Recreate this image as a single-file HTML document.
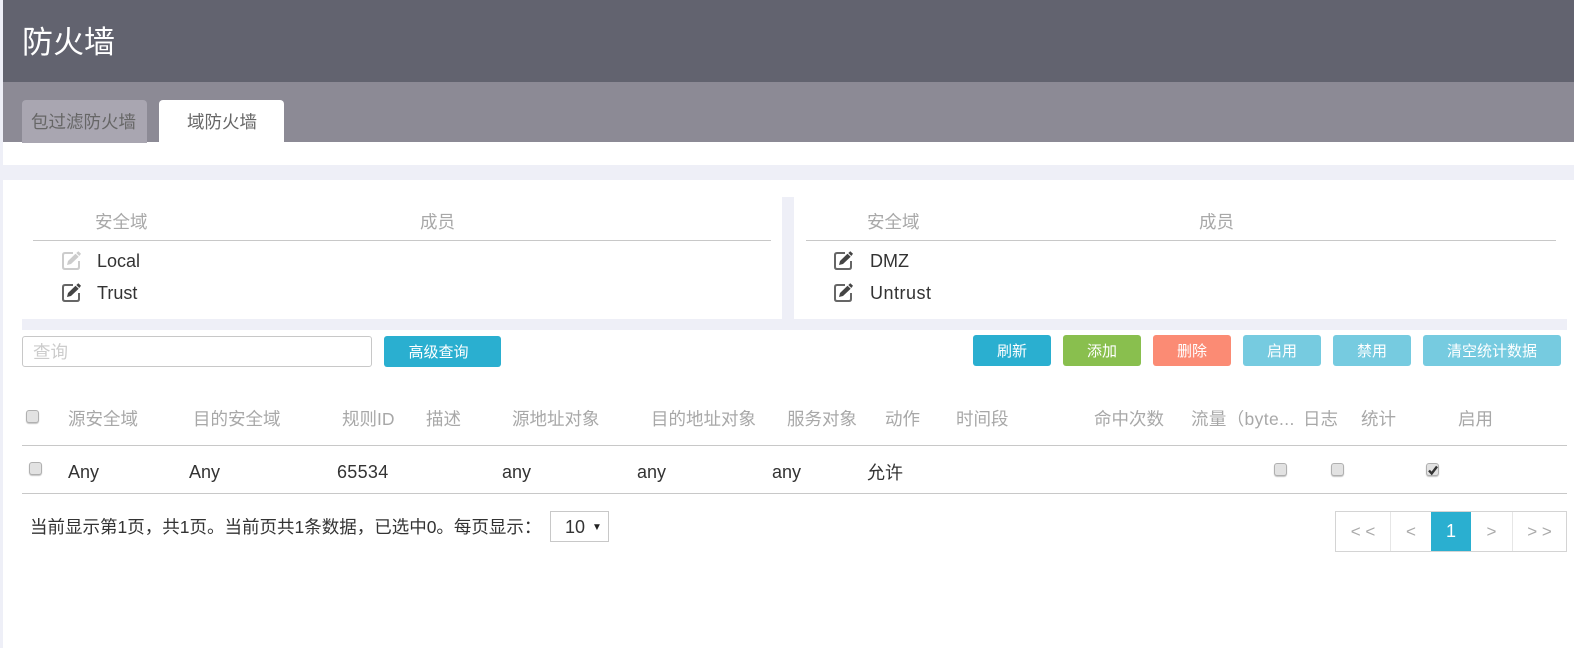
<!DOCTYPE html>
<html lang="zh">
<head>
<meta charset="utf-8">
<title>防火墙</title>
<style>
html,body{margin:0;padding:0;background:#fff}
body{position:relative;width:1574px;height:648px;overflow:hidden;font-family:"Liberation Sans","Noto Sans CJK SC",sans-serif;font-size:18px;color:#333}
.a{position:absolute}
.t{position:absolute;white-space:nowrap;line-height:24px}
.h{color:#a8a8a8}
.btn{position:absolute;top:335px;height:31px;line-height:33px;width:78px;border-radius:3px;color:#fff;text-align:center;font-size:15px}
.cb{position:absolute;width:11px;height:11px;border:1px solid #b0b0b0;border-radius:3px;background:#e2e2e2;box-shadow:0 1px 1px #c4c4c4}
.pg{position:absolute;top:511px;height:40px;line-height:40px;text-align:center;color:#aaa;font-size:17px;border-right:1px solid #e6e6e6;box-sizing:border-box}
svg{position:absolute}
</style>
</head>
<body>
<div class="a" style="left:0;top:0;width:3px;height:648px;background:#eeeff7"></div>
<div class="a" style="left:3px;top:0;width:1571px;height:82px;background:#62636f"></div>
<div class="a" style="left:3px;top:82px;width:1571px;height:60px;background:#8c8a95"></div>
<div class="t" style="left:22px;top:25px;font-size:31px;line-height:36px;color:#fff">防火墙</div>
<div class="a" style="left:22px;top:100px;width:125px;height:43px;background:#a9a6b1;border-radius:4px 4px 0 0"></div>
<div class="t" style="left:31px;top:110px;font-size:17.5px;color:#666">包过滤防火墙</div>
<div class="a" style="left:159px;top:100px;width:125px;height:42px;background:#fff;border-radius:4px 4px 0 0"></div>
<div class="t" style="left:187px;top:110px;font-size:17.5px;color:#666">域防火墙</div>
<div class="a" style="left:3px;top:165px;width:1571px;height:15px;background:#eeeff7"></div>

<div class="a" style="left:782px;top:197px;width:12px;height:122px;background:#eeeff7"></div>
<div class="a" style="left:22px;top:319px;width:1545px;height:11px;background:#eeeff7"></div>
<div class="a" style="left:33px;top:240px;width:738px;height:1px;background:#c8c8c8"></div>
<div class="a" style="left:806px;top:240px;width:750px;height:1px;background:#c8c8c8"></div>

<div class="t h" style="left:95px;top:210px;font-size:17.5px">安全域</div>
<div class="t h" style="left:420px;top:210px;font-size:17.5px">成员</div>
<div class="t h" style="left:867px;top:210px;font-size:17.5px">安全域</div>
<div class="t h" style="left:1199px;top:210px;font-size:17.5px">成员</div>

<svg style="left:62px;top:250px" width="20" height="20" viewBox="0 0 20 20"><path d="M11 3H3Q1 3 1 5V17Q1 19 3 19H15Q17 19 17 17V11" fill="none" stroke="#ccc" stroke-width="2"/><path d="M5 15L6 11L13.500 3.700L16.700 6.800L9 14Z" fill="#ccc"/><path d="M14.300 3L16.300 1.200L19 3.800L17.300 6Z" fill="#ccc"/></svg>
<svg style="left:62px;top:282px" width="20" height="20" viewBox="0 0 20 20"><path d="M11 3H3Q1 3 1 5V17Q1 19 3 19H15Q17 19 17 17V11" fill="none" stroke="#666" stroke-width="2"/><path d="M5 15L6 11L13.500 3.700L16.700 6.800L9 14Z" fill="#444"/><path d="M14.300 3L16.300 1.200L19 3.800L17.300 6Z" fill="#444"/></svg>
<svg style="left:834px;top:250px" width="20" height="20" viewBox="0 0 20 20"><path d="M11 3H3Q1 3 1 5V17Q1 19 3 19H15Q17 19 17 17V11" fill="none" stroke="#666" stroke-width="2"/><path d="M5 15L6 11L13.500 3.700L16.700 6.800L9 14Z" fill="#444"/><path d="M14.300 3L16.300 1.200L19 3.800L17.300 6Z" fill="#444"/></svg>
<svg style="left:834px;top:282px" width="20" height="20" viewBox="0 0 20 20"><path d="M11 3H3Q1 3 1 5V17Q1 19 3 19H15Q17 19 17 17V11" fill="none" stroke="#666" stroke-width="2"/><path d="M5 15L6 11L13.500 3.700L16.700 6.800L9 14Z" fill="#444"/><path d="M14.300 3L16.300 1.200L19 3.800L17.300 6Z" fill="#444"/></svg>

<div class="t" style="left:97px;top:249px">Local</div>
<div class="t" style="left:97px;top:281px">Trust</div>
<div class="t" style="left:870px;top:249px">DMZ</div>
<div class="t" style="left:870px;top:281px;letter-spacing:.5px">Untrust</div>

<div class="a" style="left:22px;top:336px;width:348px;height:29px;border:1px solid #c8c8c8;border-radius:3px"></div>
<div class="t" style="left:33px;top:340px;color:#ccc;font-size:17.500px">查询</div>
<div class="btn" style="left:384px;top:336px;width:109px;padding-right:8px;background:#2aafd0">高级查询</div>
<div class="btn" style="left:973px;background:#2aafd0">刷新</div>
<div class="btn" style="left:1063px;background:#89bf4e">添加</div>
<div class="btn" style="left:1153px;background:#fb8b74">删除</div>
<div class="btn" style="left:1243px;background:#76cbe0">启用</div>
<div class="btn" style="left:1333px;background:#76cbe0">禁用</div>
<div class="btn" style="left:1423px;width:138px;background:#76cbe0">清空统计数据</div>

<div class="cb" style="left:26px;top:410px"></div>
<div class="t h" style="left:68px;top:407px;font-size:17.500px">源安全域</div>
<div class="t h" style="left:193px;top:407px;font-size:17.500px">目的安全域</div>
<div class="t h" style="left:342px;top:407px;font-size:17.500px">规则ID</div>
<div class="t h" style="left:426px;top:407px;font-size:17.500px">描述</div>
<div class="t h" style="left:512px;top:407px;font-size:17.500px">源地址对象</div>
<div class="t h" style="left:651px;top:407px;font-size:17.500px">目的地址对象</div>
<div class="t h" style="left:787px;top:407px;font-size:17.500px">服务对象</div>
<div class="t h" style="left:885px;top:407px;font-size:17.500px">动作</div>
<div class="t h" style="left:956px;top:407px;font-size:17.500px">时间段</div>
<div class="t h" style="left:1094px;top:407px;font-size:17.500px">命中次数</div>
<div class="t h" style="left:1191px;top:407px;font-size:17.500px;letter-spacing:.35px">流量（byte...</div>
<div class="t h" style="left:1303px;top:407px;font-size:17.500px">日志</div>
<div class="t h" style="left:1361px;top:407px;font-size:17.500px">统计</div>
<div class="t h" style="left:1458px;top:407px;font-size:17.500px">启用</div>

<div class="a" style="left:22px;top:445px;width:1545px;height:1px;background:#c8c8c8"></div>
<div class="a" style="left:22px;top:493px;width:1545px;height:1px;background:#c8c8c8"></div>

<div class="cb" style="left:29px;top:462px"></div>
<div class="t" style="left:68px;top:460px">Any</div>
<div class="t" style="left:189px;top:460px">Any</div>
<div class="t" style="left:337px;top:460px;letter-spacing:.3px">65534</div>
<div class="t" style="left:502px;top:460px">any</div>
<div class="t" style="left:637px;top:460px">any</div>
<div class="t" style="left:772px;top:460px">any</div>
<div class="t" style="left:867px;top:461px">允许</div>
<div class="cb" style="left:1274px;top:463px"></div>
<div class="cb" style="left:1331px;top:463px"></div>
<div class="cb" style="left:1426px;top:463px"></div>
<svg style="left:1427px;top:464px" width="12" height="12" viewBox="0 0 12 12"><path d="M2 6.500L4.700 9.500L10 2.500" fill="none" stroke="#333" stroke-width="2.400"/></svg>

<div class="t" style="left:30px;top:515px;font-size:17.500px;color:#333">当前显示第1页，共1页。当前页共1条数据，已选中0。每页显示：</div>
<div class="a" style="left:550px;top:511px;width:57px;height:29px;border:1px solid #c8c8c8"></div>
<div class="t" style="left:565px;top:515px">10</div>
<div class="t" style="left:592px;top:516px;font-size:10px;color:#222">▼</div>

<div class="a" style="left:1335px;top:511px;width:232px;height:41px;border:1px solid #d4d4d4;box-sizing:border-box"></div>
<div class="pg" style="left:1336px;top:512px;height:39px;line-height:39px;width:55px">&lt; &lt;</div>
<div class="pg" style="left:1391px;top:512px;height:39px;line-height:39px;width:41px">&lt;</div>
<div class="pg" style="left:1431px;top:512px;height:39px;line-height:39px;width:40px;background:#2aafd0;color:#fff;font-size:18px;border:0">1</div>
<div class="pg" style="left:1471px;top:512px;height:39px;line-height:39px;width:42px">&gt;</div>
<div class="pg" style="left:1513px;top:512px;height:39px;line-height:39px;width:53px;border:0">&gt; &gt;</div>
</body>
</html>
